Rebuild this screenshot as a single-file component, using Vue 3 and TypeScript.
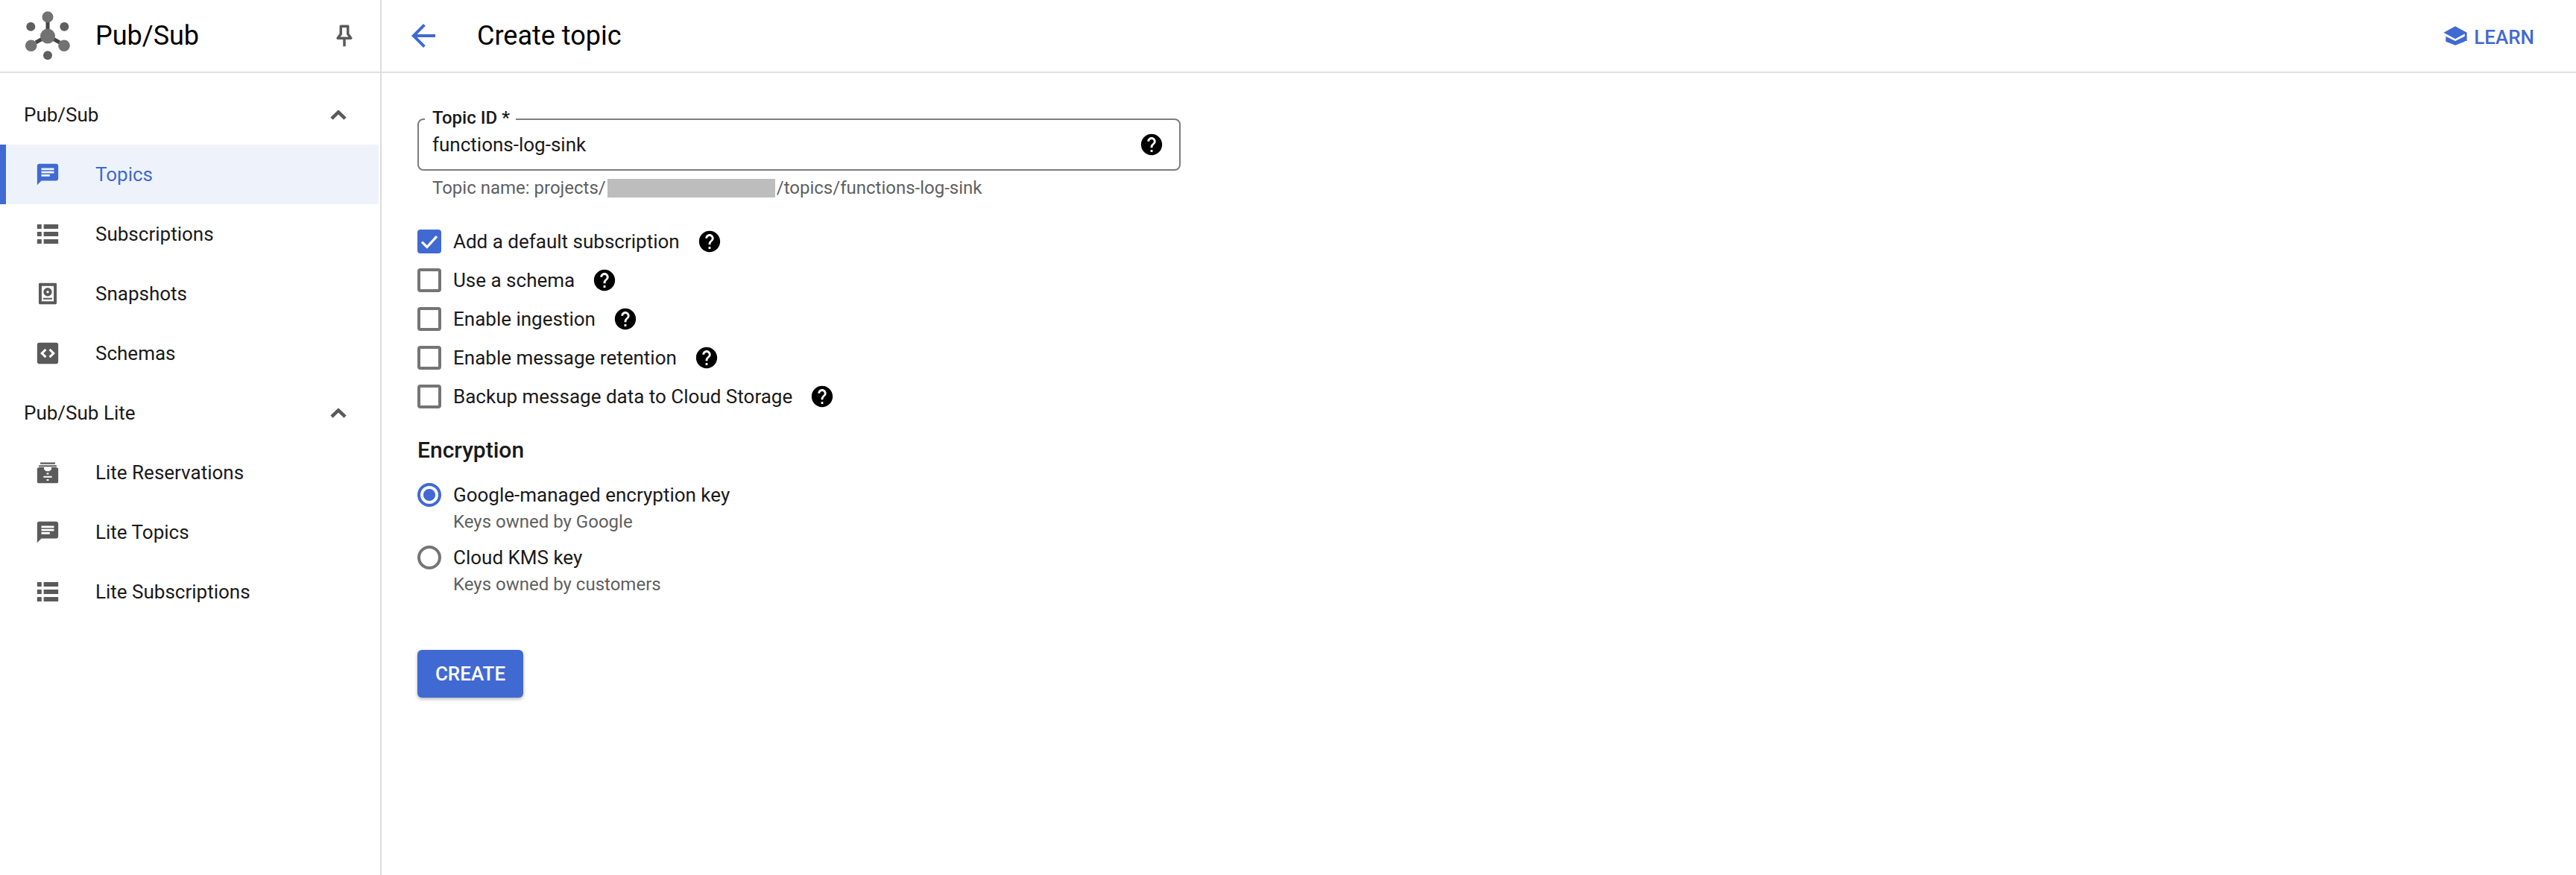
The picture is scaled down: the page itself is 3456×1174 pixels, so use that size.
<script setup lang="ts">
interface NavItem { label: string; icon: string; active?: boolean }
interface NavSection { title: string; items: NavItem[] }

const sections: NavSection[] = [
  {
    title: 'Pub/Sub',
    items: [
      { label: 'Topics', icon: 'chat', active: true },
      { label: 'Subscriptions', icon: 'list' },
      { label: 'Snapshots', icon: 'snapshot' },
      { label: 'Schemas', icon: 'schema' },
    ],
  },
  {
    title: 'Pub/Sub Lite',
    items: [
      { label: 'Lite Reservations', icon: 'archive' },
      { label: 'Lite Topics', icon: 'chat' },
      { label: 'Lite Subscriptions', icon: 'list' },
    ],
  },
]

const options = [
  { label: 'Add a default subscription', checked: true },
  { label: 'Use a schema', checked: false },
  { label: 'Enable ingestion', checked: false },
  { label: 'Enable message retention', checked: false },
  { label: 'Backup message data to Cloud Storage', checked: false },
]

const keys = [
  { label: 'Google-managed encryption key', sub: 'Keys owned by Google', selected: true },
  { label: 'Cloud KMS key', sub: 'Keys owned by customers', selected: false },
]

const helpPath =
  'M12 2C6.48 2 2 6.48 2 12s4.48 10 10 10 10-4.48 10-10S17.52 2 12 2zm1 17h-2v-2h2v2zm2.07-7.75l-.9.92C13.45 12.9 13 13.5 13 15h-2v-.5c0-1.1.45-2.1 1.17-2.83l1.24-1.26c.37-.36.59-.86.59-1.41 0-1.1-.9-2-2-2s-2 .9-2 2H8c0-2.21 1.79-4 4-4s4 1.79 4 4c0 .88-.36 1.68-.93 2.25z'
</script>

<template>
  <div class="app">
    <aside class="sidebar">
      <div class="brand">
        <svg class="logo" width="80" height="96" viewBox="24 0 80 96">
          <g stroke="#454545" stroke-width="5">
            <path d="M64 28v11M48 57l8-4.5M80 57l-8-4.500" />
          </g>
          <g fill="#727272">
            <circle cx="64" cy="48.500" r="10" />
            <circle cx="64" cy="22.700" r="7.500" />
            <circle cx="41.700" cy="61.300" r="7.800" />
            <circle cx="86" cy="61.300" r="7.800" />
          </g>
          <g fill="#5f5f5f">
            <circle cx="41.300" cy="35.700" r="6" />
            <circle cx="86.300" cy="35.700" r="6" />
            <circle cx="64" cy="74.300" r="6" />
          </g>
        </svg>
        <span class="brand-name">Pub/Sub</span>
        <svg class="pin" width="38" height="38" viewBox="0 0 24 24" fill="none" stroke="#5a5a5a" stroke-width="2.200">
          <path d="M9 4h6v6.500l2.600 3.500H6.400L9 10.500z" stroke-linejoin="round" />
          <path d="M12 14v7" />
        </svg>
      </div>
      <nav class="nav">
        <section v-for="section in sections" :key="section.title">
          <div class="nav-head">
            <span>{{ section.title }}</span>
            <svg width="32" height="32" viewBox="0 0 24 24" fill="none" stroke="#5a5a5a" stroke-width="3.400" stroke-linejoin="round">
              <path d="M5.200 15.800l6.800-6.600 6.800 6.600" />
            </svg>
          </div>
          <a
            v-for="item in section.items"
            :key="item.label"
            class="nav-item"
            :class="{ active: item.active }"
          >
            <svg class="nav-icon" width="34" height="34" viewBox="0 0 24 24" fill="currentColor">
              <path
                v-if="item.icon === 'chat'"
                d="M20 2H4c-1.1 0-1.99.9-1.99 2L2 22l4-4h14c1.1 0 2-.9 2-2V4c0-1.1-.9-2-2-2zM6 9h12v2H6V9zm8 5H6v-2h8v2zm4-6H6V6h12v2z"
              />
              <path
                v-else-if="item.icon === 'list'"
                d="M2 2.850h4.200v4.200H2zM8.200 2.850H22v4.200H8.200zM2 9.900h4.200v4.200H2zM8.200 9.900H22v4.200H8.200zM2 16.950h4.200v4.200H2zM8.200 16.950H22v4.200H8.200z"
              />
              <path
                v-else-if="item.icon === 'snapshot'"
                fill-rule="evenodd"
                d="M4.500 2h15a1 1 0 0 1 1 1v18a1 1 0 0 1-1 1h-15a1 1 0 0 1-1-1V3a1 1 0 0 1 1-1zm1.800 2.800v14.400h11.400V4.800zM12 6.400a4 4 0 1 1 0 8 4 4 0 0 1 0-8zm0 2.800a1.200 1.200 0 1 0 0 2.400 1.200 1.200 0 0 0 0-2.400zM7.800 16h8.400v1.500H7.800z"
              />
              <path
                v-else-if="item.icon === 'schema'"
                fill-rule="evenodd"
                d="M4 2h16a2 2 0 0 1 2 2v16a2 2 0 0 1-2 2H4a2 2 0 0 1-2-2V4a2 2 0 0 1 2-2zm5.400 5.600L5 12l4.400 4.400 1.500-1.500L8 12l2.900-2.900zm5.200 0l-1.500 1.500L16 12l-2.900 2.900 1.500 1.500L19 12z"
              />
              <template v-else>
                <path d="M5 2.500h14v1.500H5zM3.600 5.200h16.800v1.400H3.600z" />
                <path
                  fill-rule="evenodd"
                  d="M2 8l2-1h4.500v2.200l2 1.500h3l2-1.500V7H20l2 1v13a1 1 0 0 1-1 1H3a1 1 0 0 1-1-1zm9 4.400v1.400h2v-1.400zm-3 3v1.400h8v-1.400zm3 3v1.400h2v-1.400z"
                />
              </template>
            </svg>
            <span>{{ item.label }}</span>
          </a>
        </section>
      </nav>
    </aside>

    <div class="main">
      <header class="topbar">
        <svg class="back" width="48" height="48" viewBox="0 0 24 24" fill="#4169d2">
          <path d="M20 11H7.830l5.590-5.590L12 4l-8 8 8 8 1.410-1.410L7.830 13H20z" />
        </svg>
        <h1>Create topic</h1>
        <a class="learn">
          <svg width="34" height="34" viewBox="0 0 24 24" fill="#4169d2">
            <path d="M3 12.500v5L12 21l9-3.500v-5L12 17zM12 3L1 9l11 6 9-4.900V17h2V9z" />
          </svg>
          <span class="learn-text">LEARN</span>
        </a>
      </header>

      <form class="form" @submit.prevent>
        <div class="field">
          <span class="field-label">Topic ID *</span>
          <span class="field-value">functions-log-sink</span>
          <svg class="help" width="34" height="34" viewBox="0 0 24 24"><path :d="helpPath" /></svg>
        </div>
        <p class="hint">Topic name: projects/<span class="redact"></span>/topics/functions-log-sink</p>

        <div class="checks">
          <label v-for="opt in options" :key="opt.label" class="check">
            <span class="box" :class="{ on: opt.checked }">
              <svg v-if="opt.checked" class="tick" width="30" height="30" viewBox="0 0 24 24" fill="none" stroke="#fff" stroke-width="2.600">
                <path d="M4 12.500l5.500 5.500L20 6.500" />
              </svg>
            </span>
            <span>{{ opt.label }}</span>
            <svg class="help" width="34" height="34" viewBox="0 0 24 24"><path :d="helpPath" /></svg>
          </label>
        </div>

        <h2>Encryption</h2>
        <div class="radios">
          <div v-for="key in keys" :key="key.label" class="radio">
            <span class="dot" :class="{ on: key.selected }"></span>
            <div>
              <div class="radio-label">{{ key.label }}</div>
              <div class="radio-sub">{{ key.sub }}</div>
            </div>
          </div>
        </div>

        <button class="create" type="submit">CREATE</button>
      </form>
    </div>
  </div>
</template>

<style>
html, body { margin: 0; background: #fff; }
</style>

<style scoped>
.app {
  display: flex;
  width: 3456px;
  height: 1174px;
  overflow: hidden;
  font-family: Roboto, "Liberation Sans", sans-serif;
  color: #000;
  background: #fff;
}
.sidebar {
  width: 512px;
  flex: none;
  box-sizing: border-box;
  border-right: 2px solid #dcdcdc;
}
.brand {
  height: 98px;
  box-sizing: border-box;
  border-bottom: 2px solid #e0e0e0;
  display: flex;
  align-items: center;
  padding-left: 24px;
  padding-right: 29px;
}
.logo { flex: none; }
.brand-name {
  font-size: 36px;
  margin-left: 24px;
  flex: 1;
}
.nav { padding-top: 16px; }
.nav-head {
  height: 80px;
  display: flex;
  align-items: center;
  justify-content: space-between;
  padding: 0 40px 0 32px;
  font-size: 26px;
  color: #1a1a1a;
}
.nav-item {
  height: 80px;
  display: flex;
  align-items: center;
  box-sizing: border-box;
  padding-left: 47px;
  font-size: 26px;
  color: #1a1a1a;
}
.nav-icon { color: #5a5a5a; margin-right: 47px; flex: none; }
.nav-item.active {
  background: #eef3fb;
  color: #4169d2;
  border-left: 8px solid #4169d2;
  padding-left: 39px;
  margin-right: 2px;
}
.nav-item.active .nav-icon { color: #4169d2; }

.main { flex: 1; min-width: 0; }
.topbar {
  height: 98px;
  box-sizing: border-box;
  border-bottom: 2px solid #e0e0e0;
  display: flex;
  align-items: center;
  padding-left: 32px;
  padding-right: 56px;
}
.back { flex: none; margin-right: 48px; }
h1 {
  font-size: 36px;
  font-weight: 400;
  margin: 0;
  flex: 1;
}
.learn {
  display: flex;
  align-items: center;
  gap: 8px;
  color: #4169d2;
  font-size: 26px;
  font-weight: 500;
}
.learn-text { padding-top: 3px; }
.form {
  padding: 61px 0 0 48px;
}
.field {
  width: 1024px;
  height: 70px;
  box-sizing: border-box;
  border: 2px solid #7d7d7d;
  border-radius: 8px;
  display: flex;
  align-items: center;
  justify-content: space-between;
  padding: 0 20px 0 18px;
  position: relative;
  font-size: 26px;
}
.field-label {
  position: absolute;
  left: 8px;
  top: -17px;
  background: #fff;
  padding: 0 8px 0 10px;
  font-size: 24px;
  font-weight: 500;
  line-height: 28px;
  color: #1a1a1a;
}
.field-value { color: #1a1a1a; }
.help { fill: #000; flex: none; }
.hint {
  margin: 8px 0 0 20px;
  height: 30px;
  display: flex;
  align-items: center;
  font-size: 24px;
  color: #5f5f5f;
}
.redact {
  display: inline-block;
  width: 225px;
  height: 25px;
  margin: 0 2px;
  background: #bdbdbd;
}
.checks {
  margin-top: 31px;
  display: flex;
  flex-direction: column;
}
.check {
  height: 52px;
  display: flex;
  align-items: center;
  font-size: 26px;
  color: #1a1a1a;
}
.box {
  width: 32px;
  height: 32px;
  box-sizing: border-box;
  border: 4px solid #757575;
  border-radius: 4px;
  margin-right: 16px;
  display: flex;
  align-items: center;
  justify-content: center;
  flex: none;
}
.tick { flex: none; }
.box.on { background: #4169d2; border-color: #4169d2; }
.check .help { margin-left: 23px; }
h2 {
  font-size: 30px;
  font-weight: 500;
  margin: 26px 0 0;
  line-height: 40px;
  color: #1a1a1a;
}
.radios { margin-top: 23px; }
.radio {
  display: flex;
  align-items: flex-start;
  height: 84px;
}
.dot {
  width: 32px;
  height: 32px;
  box-sizing: border-box;
  border: 4px solid #757575;
  border-radius: 50%;
  margin-right: 16px;
  flex: none;
  margin-top: 1px;
}
.dot.on {
  border-color: #4169d2;
  background: radial-gradient(circle, #4169d2 0 7.5px, #fff 8.5px);
}
.radio-label { font-size: 26px; line-height: 34px; color: #1a1a1a; }
.radio-sub { font-size: 24px; line-height: 38px; color: #5f5f5f; }
.create {
  display: block;
  margin-top: 57px;
  width: 142px;
  height: 64px;
  border: 0;
  border-radius: 6px;
  background: #4169d2;
  color: #fff;
  font-family: inherit;
  font-size: 26px;
  font-weight: 500;
  box-shadow: 0 2px 4px rgba(60, 64, 67, 0.4);
}
</style>
